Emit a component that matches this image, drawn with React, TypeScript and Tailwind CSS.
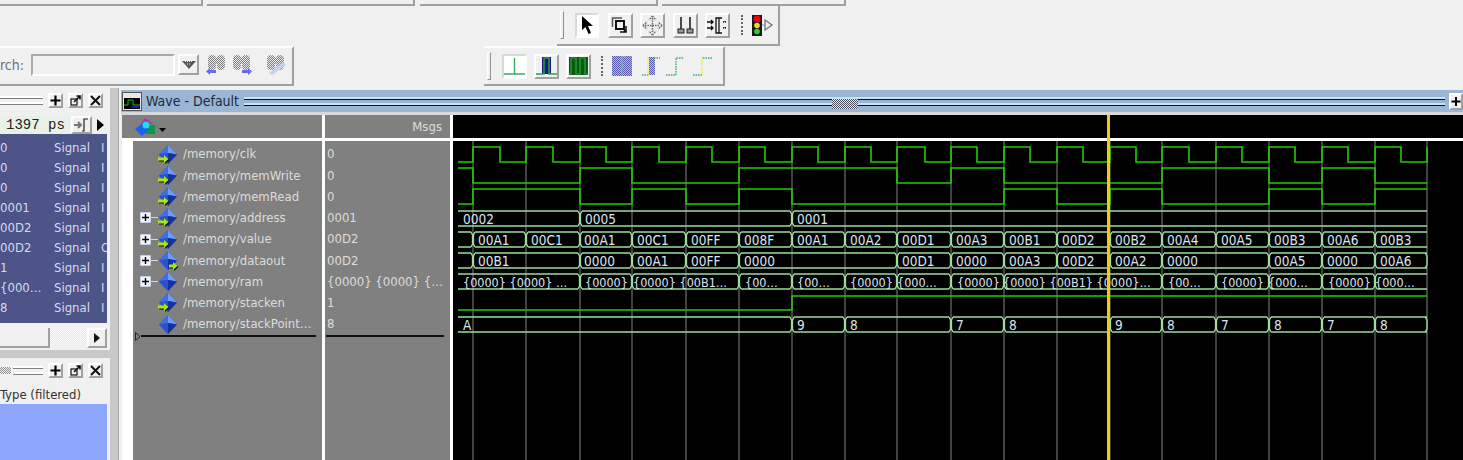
import React from "react";

const G = [473, 526, 580, 632, 686, 739, 792, 845, 897, 951, 1004, 1057, 1110, 1162, 1216, 1269, 1322, 1375, 1427];
const CLK_FALL = [500, 553, 606, 659, 712, 765, 818, 871, 925, 977, 1030, 1083, 1136, 1189, 1242, 1295, 1348, 1401];

function digital(hi: number, lo: number, start: "h" | "l", flips: number[], end = 1427) {
  let level = start === "h" ? hi : lo;
  let d = `M458 ${level}`;
  for (const x of flips) {
    d += ` L${x} ${level}`;
    level = level === hi ? lo : hi;
    d += ` L${x} ${level}`;
  }
  return d + ` L${end} ${level}`;
}

const clkFlips = (() => {
  const out: number[] = [];
  for (let i = 0; i < 18; i++) {
    out.push(G[i], CLK_FALL[i]);
  }
  out.push(1427);
  return out;
})();

type Bus = { hi: number; lo: number; tr: number[]; close?: boolean; size?: number; labels: [number, string][] };

const BUSES: Bus[] = [
  { hi: 211, lo: 226, tr: [580, 792], labels: [[463, "0002"], [585, "0005"], [797, "0001"]] },
  {
    hi: 232, lo: 247,
    tr: [473, 526, 580, 632, 686, 739, 792, 845, 897, 951, 1004, 1057, 1110, 1162, 1216, 1269, 1322, 1375],
    labels: [[478, "00A1"], [531, "00C1"], [584, "00A1"], [637, "00C1"], [691, "00FF"], [744, "008F"], [797, "00A1"], [850, "00A2"], [902, "00D1"], [956, "00A3"], [1009, "00B1"], [1062, "00D2"], [1115, "00B2"], [1167, "00A4"], [1221, "00A5"], [1274, "00B3"], [1327, "00A6"], [1380, "00B3"]],
  },
  {
    hi: 253, lo: 268, close: true,
    tr: [473, 580, 632, 686, 739, 897, 951, 1004, 1057, 1110, 1162, 1269, 1322, 1375],
    labels: [[478, "00B1"], [584, "0000"], [637, "00A1"], [691, "00FF"], [744, "0000"], [902, "00D1"], [956, "0000"], [1009, "00A3"], [1062, "00D2"], [1115, "00A2"], [1167, "0000"], [1274, "00A5"], [1327, "0000"], [1380, "00A6"]],
  },
  {
    hi: 274, lo: 289, size: 12.5,
    tr: [580, 632, 739, 792, 845, 897, 951, 1004, 1162, 1216, 1269, 1322, 1375],
    labels: [[463, "{0000} {0000} …"], [585, "{0000}"], [633, "{0000} {00B1…"], [745, "{00…"], [797, "{00…"], [850, "{0000}"], [897, "{000…"], [957, "{0000}"], [1003, "{0000} {00B1} {0000}…"], [1168, "{00…"], [1221, "{0000}"], [1268, "{000…"], [1328, "{0000}"], [1375, "{000…"]],
  },
  {
    hi: 317, lo: 332, close: true,
    tr: [792, 845, 951, 1004, 1110, 1162, 1216, 1269, 1322, 1375],
    labels: [[463, "A"], [797, "9"], [850, "8"], [956, "7"], [1009, "8"], [1115, "9"], [1167, "8"], [1221, "7"], [1274, "8"], [1327, "7"], [1380, "8"]],
  },
];

function busPath(b: Bus) {
  const { hi, lo, tr, close } = b;
  let d = "";
  const pts = [458, ...tr, 1427];
  for (let i = 0; i < pts.length - 1; i++) {
    const a = pts[i] + (i === 0 ? 0 : 2);
    const e = pts[i + 1] - (i === pts.length - 2 ? 0 : 2);
    d += ` M${a} ${hi} L${e} ${hi} M${a} ${lo} L${e} ${lo}`;
  }
  for (const x of tr) {
    d += ` M${x - 2} ${hi} L${x - 0.5} ${hi + 3} L${x - 0.5} ${lo - 3} L${x - 2} ${lo}`;
    d += ` M${x + 2} ${hi} L${x + 0.5} ${hi + 3} L${x + 0.5} ${lo - 3} L${x + 2} ${lo}`;
  }
  if (close) d += ` M1425 ${hi} L1427 ${hi + 3} L1427 ${lo - 3} L1425 ${lo}`;
  return d;
}

function WaveCanvas() {
  return (
    <svg viewBox="453 141 1010 319" className="block h-[319px] w-[1010px] bg-black">
      {G.map((x) => (
        <line key={x} x1={x} x2={x} y1={141} y2={460} stroke="#666666" strokeWidth={1.3} />
      ))}
      <g fill="none" stroke="#22cc00" strokeWidth={1.6}>
        <path d={digital(147, 162, "l", clkFlips)} />
        <path d={digital(168, 183, "h", [473, 580, 632, 739, 897, 951, 1004, 1162, 1269, 1322, 1375])} />
        <path d={digital(189, 204, "l", [473, 580, 632, 686, 739, 792, 1004, 1057, 1110, 1162, 1269, 1322, 1375])} />
        <path d={digital(296, 310, "l", [792])} />
      </g>
      {BUSES.map((b) => (
        <g key={b.hi}>
          <path d={busPath(b)} fill="none" stroke="#a0dca0" strokeWidth={1.3} />
          {b.labels.map(([x, t], i) => (
            <text key={i} x={x} y={b.hi + 12.5} fill="#dce6f2" fontSize={b.size ?? 13.5}>
              {t}
            </text>
          ))}
        </g>
      ))}
    </svg>
  );
}

function Diamond({ arrow }: { arrow: "in" | "out" | "none" }) {
  return (
    <svg width="20" height="21" viewBox="1 0 20 21" className="shrink-0 overflow-visible">
      <path d="M11 1 L20 10.5 L11 20 L2 10.5 Z" fill="#2348c8" />
      <path d="M11 1 L20 10.5 L11 9 Z" fill="#6f9cf4" />
      <path d="M11 1 L2 10.5 L11 9 Z" fill="#3f6fe4" />
      <path d="M2 10.5 L11 20 L11 9 Z" fill="#2a50d8" />
      <path d="M20 10.5 L11 20 L11 9 Z" fill="#18309c" />
      {arrow === "in" && (
        <g>
          <path d="M2 14.5 H8 V12 L12.5 16 L8 20 V17.5 H2 Z" fill="#111" />
          <path d="M1 13.5 H7 V11 L11.5 15 L7 19 V16.5 H1 Z" fill="#a4e818" />
        </g>
      )}
      {arrow === "out" && (
        <g>
          <path d="M13 15.5 H17 V13 L21.5 17 L17 21 V18.5 H13 Z" fill="#111" />
          <path d="M12 14.5 H16 V12 L20.5 16 L16 20 V17.5 H12 Z" fill="#a4e818" />
        </g>
      )}
    </svg>
  );
}

const ROWS: { name: string; msg: string; plus?: boolean; arrow: "in" | "out" | "none" }[] = [
  { name: "/memory/clk", msg: "0", arrow: "in" },
  { name: "/memory/memWrite", msg: "0", arrow: "in" },
  { name: "/memory/memRead", msg: "0", arrow: "in" },
  { name: "/memory/address", msg: "0001", plus: true, arrow: "in" },
  { name: "/memory/value", msg: "00D2", plus: true, arrow: "in" },
  { name: "/memory/dataout", msg: "00D2", plus: true, arrow: "out" },
  { name: "/memory/ram", msg: "{0000} {0000} {…", plus: true, arrow: "none" },
  { name: "/memory/stacken", msg: "1", arrow: "in" },
  { name: "/memory/stackPoint…", msg: "8", arrow: "none" },
];

const LEFT: [string, string][] = [
  ["0", "I"], ["0", "I"], ["0", "I"], ["0001", "I"], ["00D2", "I"], ["00D2", "O"], ["1", "I"], ["{000…", "I"], ["8", "I"],
];

function Bevel({ className, pressed, children }: { className: string; pressed?: boolean; children?: React.ReactNode }) {
  return (
    <div
      className={`flex shrink-0 items-center justify-center border-t-2 border-l-2 border-r-2 border-b-2 ${
        pressed
          ? "border-t-[#d8d8d8] border-l-[#d8d8d8] border-r-white border-b-white bg-white"
          : "border-t-white border-l-white border-r-[#a0a0a0] border-b-[#a0a0a0] bg-[#f0f0f0]"
      } ${className}`}
    >
      {children}
    </div>
  );
}

function Grooves({ light, dark, className }: { light: string; dark: string; className: string }) {
  return (
    <div className={`flex flex-col gap-[3px] ${className}`}>
      <div className={`h-[3px] border-t-2 border-b ${light} ${dark}`} />
      <div className={`h-[3px] border-t-2 border-b ${light} ${dark}`} />
    </div>
  );
}

function DockButtons() {
  return (
    <div className="flex items-center gap-[5px]">
      <Bevel className="h-[15px] w-[15px]">
        <svg width="11" height="11" viewBox="0 0 11 11"><path d="M5.5 0.5V10.5M0.5 5.5H10.5" stroke="#000" strokeWidth="2.2" /></svg>
      </Bevel>
      <Bevel className="h-[15px] w-[15px]">
        <svg width="11" height="11" viewBox="0 0 11 11" fill="none" stroke="#111" strokeWidth="1.2"><rect x="1" y="4" width="6" height="6" /><path d="M4 7 L10 1 M6.5 1 H10 V4.5" strokeWidth="1.6" /></svg>
      </Bevel>
      <Bevel className="h-[15px] w-[15px]">
        <svg width="11" height="11" viewBox="0 0 11 11"><path d="M1 1 L10 10 M10 1 L1 10" stroke="#111" strokeWidth="2" /></svg>
      </Bevel>
    </div>
  );
}

function Dither({ id, c1, c2 }: { id: string; c1: string; c2: string }) {
  return (
    <pattern id={id} width="2" height="2" patternUnits="userSpaceOnUse">
      <rect width="2" height="2" fill={c2} />
      <rect width="1" height="1" fill={c1} />
      <rect x="1" y="1" width="1" height="1" fill={c1} />
    </pattern>
  );
}

function BinoShape({ id }: { id: string }) {
  return (
    <g fill={`url(#${id})`}>
      <rect x="2" y="1" width="8" height="15" rx="4" />
      <rect x="11" y="1" width="8" height="15" rx="4" />
      <rect x="8" y="4" width="5" height="6" />
    </g>
  );
}

function Binoculars({ id, arrow }: { id: string; arrow: "l" | "r" }) {
  return (
    <svg width="22" height="22" viewBox="0 0 22 22">
      <defs><Dither id={id} c1="#808080" c2="#e8e8e8" /></defs>
      <BinoShape id={id} />
      {arrow === "l" && <path d="M0 17.5 L4 14 V16 H10 V19 H4 V21 Z" fill="#4848f0" opacity="0.8" />}
      {arrow === "r" && <path d="M21 17.5 L17 14 V16 H11 V19 H17 V21 Z" fill="#4848f0" opacity="0.8" />}
    </svg>
  );
}

function SearchBar() {
  return (
    <div className="flex h-[40px] w-[294px] shrink-0 items-center border-t-2 border-r-2 border-b-2 border-t-white border-r-[#a0a0a0] border-b-[#a0a0a0] bg-[#f0f0f0]">
      <span className="w-[31px] shrink-0 pr-[8px] pb-[2px] text-right text-[14px] leading-none whitespace-nowrap text-[#707070]">
        rch:
      </span>
      <div className="mb-[2px] h-[22px] w-[144px] shrink-0 border-2 border-t-[#a8a8a8] border-l-[#a8a8a8] border-r-white border-b-white bg-[#f0f0f0]" />
      <Bevel className="mb-[3px] ml-[3px] h-[21px] w-[21px]">
        <svg width="14" height="10" viewBox="0 0 14 10"><path d="M0 1 H14 L7 9 Z" fill="#555" /><path d="M3 1.5 H11 M5 4 H9" stroke="#f0f0f0" strokeDasharray="1 1" /></svg>
      </Bevel>
      <div className="mb-[2px] ml-[7px] flex items-center gap-[3px]">
        <Binoculars id="b1" arrow="l" />
        <Binoculars id="b2" arrow="r" />
        <svg width="22" height="22" viewBox="0 0 22 22" className="ml-[9px]">
          <defs><Dither id="b3" c1="#808080" c2="#e8e8e8" /></defs>
          <BinoShape id="b3" />
          <path d="M4 19 L18 8 L21 11 L7 21 Z" fill="#c4d0ec" />
        </svg>
      </div>
    </div>
  );
}

function Handle() {
  return <div className="h-[28px] w-[4px] shrink-0 border-t border-l border-t-white border-l-white border-r border-b border-r-[#909090] border-b-[#909090]" />;
}

function TopToolbar() {
  return (
    <div className="ml-[557px] flex h-[40px] w-[223px] items-center border-r-2 border-b-2 border-r-[#a0a0a0] border-b-[#a0a0a0] bg-[#f0f0f0] pl-[3px]">
      <Handle />
      <Bevel pressed className="ml-[11px] h-[25px] w-[24px]">
        <svg width="16" height="20" viewBox="0 0 16 20"><path d="M3 1 L3 15 L6.5 12 L9.5 19 L12 18 L9 11 L14 11 Z" fill="#000" /></svg>
      </Bevel>
      <Bevel className="ml-[9px] h-[25px] w-[25px]">
        <svg width="19" height="19" viewBox="0 0 19 19" fill="none" stroke="#111"><path d="M1.5 11 V2 H11" strokeWidth="1.5" stroke="#555" /><rect x="5" y="5" width="8" height="8" strokeWidth="2" /><path d="M15 10 V16 H9 M13 14 L15.5 16.5" strokeWidth="1.5" /></svg>
      </Bevel>
      <Bevel className="ml-[7px] h-[25px] w-[25px]">
        <svg width="21" height="21" viewBox="0 0 21 21" fill="none" stroke="#666" strokeDasharray="1.5 1" strokeWidth="1.5"><path d="M10.5 1 L7 5 M10.5 1 L14 5 M10.5 20 L7 16 M10.5 20 L14 16 M1 10.5 L5 7 M1 10.5 L5 14 M20 10.5 L16 7 M20 10.5 L16 14 M10.5 3 V18 M3 10.5 H18" /></svg>
      </Bevel>
      <Bevel className="ml-[8px] h-[25px] w-[25px]">
        <svg width="19" height="19" viewBox="0 0 19 19" stroke="#222" fill="#9a9a9a"><path d="M5 1 V13 M14 1 V13" fill="none" strokeWidth="1.6" /><rect x="2" y="13" width="6" height="4" /><rect x="11" y="13" width="6" height="4" /></svg>
      </Bevel>
      <Bevel className="ml-[7px] h-[25px] w-[25px]">
        <svg width="21" height="19" viewBox="0 0 21 19" fill="none" stroke="#111" strokeWidth="1.3"><path d="M0 6 H6 M0 12 H6 M4 4 L6 6 L4 8 M4 10 L6 12 L4 14" /><path d="M15 2 H9 V17 H15" /><path d="M12 2 V17" /><path d="M18 5 V7 M18 11 V13 M16 6 H20 M16 12 H20" strokeDasharray="1 1" /></svg>
      </Bevel>
      <div className="ml-[11px] h-[20px] w-0 border-l-2 border-dotted border-[#666]" />
      <svg width="22" height="21" viewBox="0 0 22 21" className="ml-[9px]">
        <rect x="0" y="0" width="10" height="21" fill="#181818" />
        <circle cx="5" cy="4" r="3.6" fill="#f00000" />
        <circle cx="5" cy="10.5" r="2.8" fill="#e8d820" />
        <circle cx="5" cy="16.5" r="2.8" fill="#30d030" />
        <path d="M10 10 H13" stroke="#78a8d8" />
        <path d="M13 5 V15 L20 10 Z" fill="none" stroke="#777" strokeWidth="1.3" />
      </svg>
    </div>
  );
}

function WaveToolbar() {
  const d = "1.5 1";
  return (
    <div className="ml-[190px] flex h-[40px] w-[241px] items-center border-r-2 border-b-2 border-t-2 border-t-white border-r-[#a0a0a0] border-b-[#a0a0a0] bg-[#f0f0f0] pl-[3px]">
      <Handle />
      <Bevel pressed className="ml-[11px] h-[25px] w-[25px]">
        <svg width="21" height="19" viewBox="0 0 21 19" fill="none" stroke="#3aa860" strokeWidth="1.4"><path d="M10.5 1 V17 M0 17 H21" /></svg>
      </Bevel>
      <Bevel className="ml-[7px] h-[25px] w-[25px]">
        <svg width="21" height="21" viewBox="0 0 21 21"><rect x="6" y="1" width="9" height="17" fill="#1c1c80" /><path d="M0 18 H8 V2 H13 V18 H21" fill="none" stroke="#2a9c50" strokeWidth="1.5" /></svg>
      </Bevel>
      <Bevel className="ml-[7px] h-[25px] w-[25px]">
        <svg width="21" height="20" viewBox="0 0 21 20"><rect x="1" y="1" width="19" height="18" fill="#0a5c0a" /><path d="M1 18 H3 V2 H8 V18 H12 V2 H17 V18 H20" fill="none" stroke="#30a050" strokeWidth="1.2" /></svg>
      </Bevel>
      <div className="ml-[10px] h-[20px] w-0 border-l-2 border-dotted border-[#666]" />
      <svg width="20" height="20" viewBox="0 0 20 20" className="ml-[9px]">
        <defs><Dither id="w1" c1="#5a5ab0" c2="#b8b8d4" /></defs>
        <rect width="20" height="20" fill="url(#w1)" />
        <path d="M10 19 V1 H14" fill="none" stroke="#70d090" strokeWidth="1.3" strokeDasharray={d} />
      </svg>
      <svg width="18" height="20" viewBox="0 0 18 20" className="ml-[10px]">
        <defs><Dither id="w2" c1="#5a5ab0" c2="#b8c0d4" /></defs>
        <rect x="7" y="1" width="6" height="18" fill="url(#w2)" />
        <path d="M0 19 H7 M12 2 H18" stroke="#40a868" strokeWidth="1.3" strokeDasharray={d} />
        <path d="M6 1 V19" stroke="#e8e040" strokeWidth="1.3" strokeDasharray={d} />
      </svg>
      <svg width="18" height="20" viewBox="0 0 18 20" className="ml-[6px]">
        <path d="M0 19 H10 V2 H18" fill="none" stroke="#40a868" strokeWidth="1.4" strokeDasharray={d} />
      </svg>
      <svg width="20" height="20" viewBox="0 0 20 20" className="ml-[9px]">
        <path d="M0 19 H9 M10 2 H19" stroke="#40a868" strokeWidth="1.4" strokeDasharray={d} />
        <path d="M9 1 V19" stroke="#e8e040" strokeWidth="1.4" strokeDasharray={d} />
      </svg>
    </div>
  );
}

function TopTabs() {
  const parts = ["w-[203px] ml-0", "w-[208px] ml-[4px]", "w-[238px] ml-[5px]", "w-[184px] ml-[4px]"];
  return (
    <div className="flex h-[6px]">
      {parts.map((p, i) => (
        <div key={i} className={`h-[6px] border-r-2 border-b-2 border-r-[#a0a0a0] border-b-[#a0a0a0] ${p}`} />
      ))}
    </div>
  );
}

function LeftPanels() {
  return (
    <div className="flex w-[110px] shrink-0 flex-col bg-[#c8c8c8]">
      <div className="flex h-[262px] flex-col bg-[#f0f0f0] pr-[3px]">
        <div className="flex h-[24px] shrink-0 items-center gap-[5px]">
          <Grooves light="border-t-white" dark="border-b-[#808080]" className="w-[43px]" />
          <DockButtons />
        </div>
        <div className="mt-[3px] flex h-[19px] shrink-0 items-center">
          <div className="flex h-[18px] w-[71px] items-center overflow-hidden bg-[#e8f0e8] pl-[6px] font-['Liberation_Mono'] text-[14px] leading-none whitespace-nowrap text-[#222]">
            1397 ps
          </div>
          <Bevel className="ml-px h-[18px] w-[21px]">
            <svg width="15" height="14" viewBox="0 0 15 14" fill="none"><path d="M0 7 H6 M4 4 L7 7 L4 10" stroke="#777" strokeWidth="2" /><path d="M8 13 H10 V1 H14" stroke="#222" strokeWidth="1.2" /></svg>
          </Bevel>
          <div className="ml-[2px] flex w-[13px] items-center justify-center">
            <svg width="7" height="12" viewBox="0 0 7 12"><path d="M0 0 L7 6 L0 12 Z" fill="#000" /></svg>
          </div>
        </div>
        <div className="h-[189px] shrink-0 overflow-hidden bg-[#4c5488] pt-[4px] text-[13px] text-[#d6daea]">
          {LEFT.map(([v, t], i) => (
            <div key={i} className="flex h-[20px] items-center whitespace-nowrap">
              <span className="w-[54px] shrink-0">{v}</span>
              <span className="w-[47px] shrink-0">Signal</span>
              <span className="shrink-0">{t}</span>
            </div>
          ))}
        </div>
        <div className="mt-[5px] flex h-[20px] shrink-0 items-stretch">
          <div className="w-[50px] border-r-2 border-b-2 border-r-[#a0a0a0] border-b-[#a0a0a0] bg-[#f0f0f0]" />
          <div className="w-[37px] bg-[repeating-conic-gradient(#e8e8e8_0_25%,#fafafa_0_50%)] bg-[length:2px_2px]" />
          <Bevel className="w-[20px]">
            <svg width="6" height="10" viewBox="0 0 6 10"><path d="M0 0 L6 5 L0 10 Z" fill="#111" /></svg>
          </Bevel>
        </div>
      </div>
      <div className="mt-[8px] flex min-h-0 flex-1 flex-col bg-[#f0f0f0] pr-[3px]">
        <div className="flex h-[24px] shrink-0 items-center pt-px">
          <div className="h-[7px] w-[11px] shrink-0 bg-[repeating-conic-gradient(#909090_0_25%,#f0f0f0_0_50%)] bg-[length:2px_2px]" />
          <Grooves light="border-t-white" dark="border-b-[#808080]" className="ml-[2px] w-[30px]" />
          <div className="ml-[5px]"><DockButtons /></div>
        </div>
        <div className="mt-[3px] flex h-[19px] shrink-0 items-center text-[13px] leading-none whitespace-nowrap text-[#333]">
          Type (filtered)
        </div>
        <div className="flex-1 bg-[#8ca5fd]" />
      </div>
    </div>
  );
}

function WavePanel() {
  return (
    <div className="relative flex min-w-0 flex-1 flex-col overflow-hidden border-l border-l-[#a8a8a8] bg-[#f0f0f0] pt-[2px] pl-[2px]">
      <div className="flex h-[22px] shrink-0 items-center bg-[#9ab6d4] pl-px">
        <svg width="20" height="19" viewBox="0 0 20 19" className="shrink-0">
          <rect width="20" height="19" fill="#e8e8e8" />
          <rect x="0.5" y="0.5" width="19" height="18" fill="none" stroke="#555" />
          <rect x="2" y="6" width="16" height="11" fill="#000" />
          <path d="M2 13 H6 V8 H11 V13 H18" fill="none" stroke="#18c018" />
          <path d="M9 15 H17" stroke="#2020e0" strokeWidth="1.5" />
        </svg>
        <span className="ml-[4px] w-[94px] shrink-0 text-[14px] leading-none whitespace-nowrap text-[#202840]">Wave - Default</span>
        <div className="relative ml-[4px] min-w-0 flex-1">
          <Grooves light="border-t-[#c4e4f4]" dark="border-b-[#101018]" className="w-full" />
          <div className="absolute top-[2px] left-[588px] h-[10px] w-[26px] bg-[repeating-conic-gradient(#505060_0_25%,#d8e4f0_0_50%)] bg-[length:2px_2px]" />
        </div>
        <Bevel className="ml-[4px] h-[17px] w-[14px]">
          <svg width="11" height="11" viewBox="0 0 11 11"><path d="M5.5 0.5V10.5M0.5 5.5H10.5" stroke="#000" strokeWidth="2.2" /></svg>
        </Bevel>
      </div>
      <div className="h-[3px] shrink-0 bg-[#d8d8d8]" />
      <div className="ml-px grid min-h-0 flex-1 grid-cols-[203px_128px_1fr] grid-rows-[23px_3px_1fr]">
        <div className="flex items-center border-r-[3px] border-r-white bg-[#808080] pl-[12px]">
          <svg width="24" height="20" viewBox="0 0 24 20">
            <path d="M7 7 L11 1 L19 7 Z" fill="#c020c0" />
            <rect x="11" y="8" width="10" height="9" fill="#109848" />
            <path d="M9 6 L15 12 L8 19 L1 12 Z" fill="#1860f0" />
            <circle cx="12" cy="8" r="3.5" fill="#18e0f0" />
          </svg>
          <svg width="7" height="4" viewBox="0 0 7 4" className="mt-[7px] ml-px"><path d="M0 0 H7 L3.5 4 Z" fill="#000" /></svg>
        </div>
        <div className="flex items-center justify-end border-r-[3px] border-r-white bg-[#808080] pr-[8px] text-[13px] text-[#dcdcdc]">Msgs</div>
        <div className="bg-black" />
        <div className="col-span-3 bg-white" />
        <div className="flex border-r-[3px] border-r-white bg-[#808080]">
          <div className="w-[11px] shrink-0 bg-white" />
          <div className="min-w-0 flex-1 pt-[2.4px]">
            {ROWS.map((r) => (
              <div key={r.name} className="flex h-[21.25px] items-center whitespace-nowrap text-[13px] text-[#dcdcdc]">
                <div className="flex w-[25px] shrink-0 items-center justify-end pl-[7px]">
                  {r.plus && (
                    <>
                      <div className="flex h-[11px] w-[11px] shrink-0 items-center justify-center rounded-[1px] border border-[#c8d0e0] bg-[#f4f6ff]">
                        <svg width="7" height="7" viewBox="0 0 7 7"><path d="M3.5 0V7M0 3.5H7" stroke="#000" strokeWidth="1.4" /></svg>
                      </div>
                      <div className="h-px w-[7px] shrink-0 bg-[#d8d8d8]" />
                    </>
                  )}
                </div>
                <Diamond arrow={r.arrow} />
                <span className="ml-[5px]">{r.name}</span>
              </div>
            ))}
            <div className="flex h-[3px] items-center pl-[2px]">
              <svg width="6" height="9" viewBox="0 0 6 9" className="shrink-0"><path d="M0.5 0.5 V8.5 L5 4.5 Z" fill="none" stroke="#222" /></svg>
              <div className="h-[1.5px] w-[175px] shrink-0 bg-[#111]" />
            </div>
          </div>
        </div>
        <div className="border-r-[3px] border-r-white bg-[#808080] pt-[2.4px]">
          {ROWS.map((r) => (
            <div key={r.name} className="flex h-[21.25px] items-center overflow-hidden pl-[2px] text-[13px] whitespace-nowrap text-[#dcdcdc]">{r.msg}</div>
          ))}
          <div className="flex h-[3px] items-center pl-px">
            <div className="h-[1.5px] w-[118px] bg-[#111]" />
          </div>
        </div>
        <WaveCanvas />
      </div>
      <div className="absolute top-[27px] left-[988px] h-[345px] w-[3px] bg-[#f0cc10]" />
    </div>
  );
}

export default function App() {
  return (
    <div className="flex h-[460px] w-[1463px] flex-col overflow-hidden bg-[#f0f0f0] font-['DejaVu_Sans_Condensed','DejaVu_Sans',sans-serif]">
      <TopTabs />
      <TopToolbar />
      <div className="flex">
        <SearchBar />
        <WaveToolbar />
      </div>
      <div className="mt-[2px] flex min-h-0 flex-1">
        <LeftPanels />
        <div className="w-[8px] shrink-0 bg-[#c8c8c8]" />
        <WavePanel />
      </div>
    </div>
  );
}
